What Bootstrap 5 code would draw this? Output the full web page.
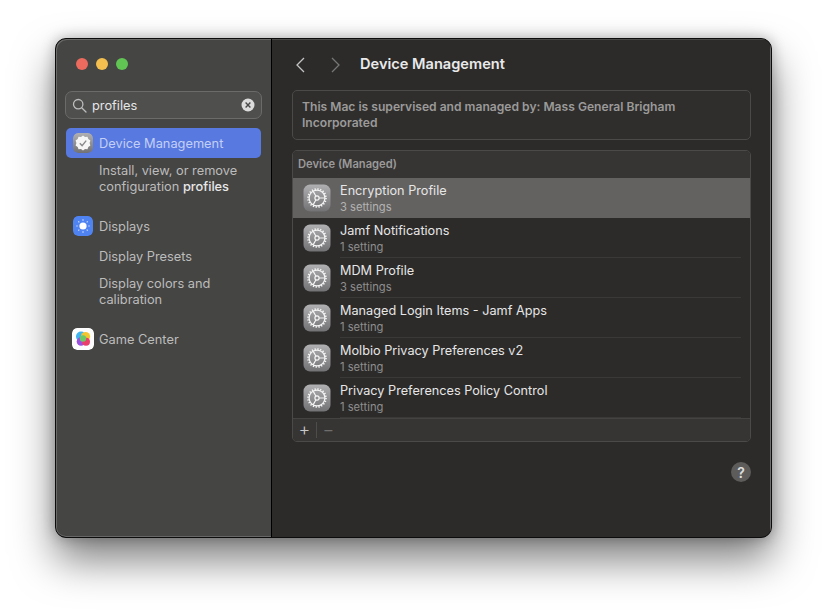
<!DOCTYPE html>
<html lang="en">

<head>
    <meta charset="UTF-8">
    <meta name="viewport" content="width=device-width, initial-scale=1.0">
    <title>Device Management</title>
    <link href="https://cdn.jsdelivr.net/npm/bootstrap@5.3.0/dist/css/bootstrap.min.css" rel="stylesheet">
    <style>
        body {
            background: #fff;
            font-family: Inter, "Liberation Sans", sans-serif;
            font-size: 12.8px;
            overflow: hidden;
            height: 611px;
            padding: 38px 55px 0 55px;
        }

        .mac-window {
            width: 717px;
            height: 500px;
            border-radius: 11px;
            border: 1px solid #0c0c0c;
            box-shadow: 0 22px 42px rgba(0, 0, 0, .5), 0 0 14px rgba(0, 0, 0, .28);
            overflow: hidden;
            background: #2c2b2a;
        }

        .side-pane {
            width: 216px;
            flex: none;
            background: #454544;
            border-right: 1px solid #000;
            box-shadow: inset 1px 1px 0 #6a6a69, inset 0 -1px 0 #666;
            border-radius: 10px 0 0 10px;
            padding: 0 10px;
            color: #bcbcbb;
        }

        .lights {
            height: 52px;
            padding: 19px 0 0 10px;
            gap: 8px;
        }

        .light {
            width: 12px;
            height: 12px;
            border-radius: 50%;
        }

        .search-box {
            height: 28px;
            margin: 0 -1px 9px -1px;
            padding: 0 6px 0 6px;
            gap: 5px;
            border: 1px solid #6b6b6a;
            border-radius: 7px;
            background: #4f4f4e;
            color: #e6e6e6;
        }

        .search-box span {
            padding-top: 1px;
        }

        .side-item {
            height: 30px;
            padding-left: 7px;
            gap: 6px;
            border-radius: 5px;
            white-space: nowrap;
        }

        .side-item span {
            padding-top: 2px;
        }

        .side-active {
            background: #5879e0;
            color: #c3cff5;
        }

        .side-sub {
            padding-left: 33px;
            line-height: 16px;
        }

        .side-sub b {
            font-weight: 500;
            color: #e8e8e8;
        }

        .gap-a {
            margin-top: 5px;
        }

        .gap-b {
            margin-top: 8px;
        }

        .gap-c {
            margin-top: 11px;
            line-height: 15.5px;
        }

        .gap-d {
            margin-top: 17px;
        }

        .app-icon {
            width: 20px;
            height: 20px;
            flex: none;
            border-radius: 5px;
            display: block;
        }

        .main-pane {
            padding: 0 20px 0 20px;
            box-shadow: inset -1px 0 0 #6f6f6e, inset 0 1px 0 #4a4a49;
        }

        .title-bar {
            height: 51px;
            color: #e9e9e9;
        }

        .title-text {
            font-size: 14.6px;
            font-weight: 600;
            margin-left: 19px;
        }

        .notice-box {
            height: 50px;
            padding: 8px 9px;
            line-height: 16px;
            border: 1px solid #4b4a49;
            border-radius: 5px;
            background: #2f2e2d;
            color: #9b9a99;
            font-size: 12.1px;
            font-weight: 600;
            margin-bottom: 10px;
        }

        .profile-box {
            height: 292px;
            border: 1px solid #4b4a49;
            border-radius: 5px;
            overflow: hidden;
        }

        .profile-head {
            height: 27px;
            padding: 0 5px;
            background: #363534;
            color: #9b9a99;
            font-size: 11.2px;
            font-weight: 600;
        }

        .profile-row {
            height: 40px;
            padding-left: 10px;
            gap: 9px;
            color: #e6e6e6;
            font-size: 12.7px;
        }

        .profile-row .row-text {
            flex: 1;
            height: 100%;
            display: flex;
            flex-direction: column;
            justify-content: center;
            line-height: 16px;
            margin-right: 9px;
            padding-top: 2px;
            border-bottom: 1px solid #3a3938;
        }

        .profile-row:last-of-type .row-text,
        .row-selected .row-text {
            border-bottom: 0;
        }

        .row-selected {
            background: #636261;
        }

        .row-sub {
            font-size: 11.2px;
            color: #8f8e8d;
        }

        .row-selected .row-sub {
            color: #b3b2b1;
        }

        .gear-icon {
            width: 28px;
            height: 28px;
            flex: none;
            display: block;
        }

        .profile-foot {
            height: 23px;
            background: #363534;
            border-top: 1px solid #444342;
        }

        .foot-btn {
            width: 23px;
            height: 100%;
            font-size: 18px;
            font-weight: 300;
            line-height: 1;
        }

        .foot-sep {
            width: 1px;
            height: 16px;
            background: #4e4d4c;
        }

        .help-btn {
            width: 20px;
            height: 20px;
            margin: 20px 0 0 auto;
            border-radius: 50%;
            background: #5d5c5b;
            color: #dedede;
            font-size: 14px;
            font-weight: 600;
        }
    </style>
</head>

<body>
    <svg width="0" height="0" class="position-absolute">
        <defs>
            <linearGradient id="grayTile" x1="0" y1="0" x2="0" y2="1">
                <stop offset="0" stop-color="#b0b0b2" />
                <stop offset="1" stop-color="#727275" />
            </linearGradient>
            <symbol id="gear" viewBox="0 0 28 28">
                <rect x=".5" y=".5" width="27" height="27" rx="6.500" fill="url(#grayTile)" />
                <circle cx="14" cy="14" r="9" fill="none" stroke="#f4f4f4" stroke-width="1.700" stroke-dasharray="1.300 1.530" />
                <circle cx="14" cy="14" r="7.900" fill="none" stroke="#f4f4f4" stroke-width="1.300" />
                <circle cx="14" cy="14" r="2.100" fill="none" stroke="#f4f4f4" stroke-width="1.200" />
                <path d="M16.100 14h5.500M13 12.200 10.200 7.400M13 15.800l-2.800 4.800" stroke="#f4f4f4" stroke-width="1.200" fill="none" />
            </symbol>
        </defs>
    </svg>

    <div class="mac-window d-flex">
        <!-- Sidebar -->
        <div class="side-pane">
            <div class="lights d-flex">
                <span class="light" style="background:#ec6a5e"></span>
                <span class="light" style="background:#f4bf4f"></span>
                <span class="light" style="background:#61c554"></span>
            </div>

            <div class="search-box d-flex align-items-center">
                <svg width="15" height="15" viewBox="0 0 15 15" fill="none" stroke="#bdbdbd" stroke-width="1.300">
                    <circle cx="6.200" cy="6.200" r="4.700" />
                    <path d="M9.700 9.700 14 14" stroke-linecap="round" />
                </svg>
                <span class="flex-grow-1">profiles</span>
                <svg width="14" height="14" viewBox="0 0 14 14">
                    <circle cx="7" cy="7" r="6.500" fill="#dcdcdc" />
                    <path d="M4.600 4.600l4.800 4.800M9.400 4.600 4.600 9.400" stroke="#4a4a4a" stroke-width="1.400" />
                </svg>
            </div>

            <div class="side-item side-active d-flex align-items-center">
                <svg class="app-icon" viewBox="0 0 20 20">
                    <rect width="20" height="20" rx="5" fill="url(#grayTile)" />
                    <path d="M10 2.500l2 1.500 2.500-.2.800 2.300 2.100 1.500-.8 2.400.8 2.400-2.100 1.500-.8 2.300-2.500-.2-2 1.500-2-1.500-2.500.2-.8-2.300-2.100-1.500.8-2.400-.8-2.400 2.100-1.500.8-2.300 2.500.2z" fill="#f6f6f6" />
                    <path d="M6.800 10.300l2.300 2.300 4.100-5" fill="none" stroke="#8a8a8d" stroke-width="1.400" />
                </svg>
                <span>Device Management</span>
            </div>
            <div class="side-sub gap-a">Install, view, or remove<br>configuration <b>profiles</b></div>

            <div class="side-item d-flex align-items-center mt-3">
                <svg class="app-icon" viewBox="0 0 20 20">
                    <rect width="20" height="20" rx="5" fill="#4f83f1" />
                    <circle cx="10" cy="10" r="3.600" fill="#fff" />
                    <path d="M10 3.300v1.400M10 15.300v1.400M3.300 10h1.400M15.300 10h1.400M5.300 5.300l1 1M13.700 13.700l1 1M14.700 5.300l-1 1M6.300 13.700l-1 1" stroke="#d5e2fc" stroke-width="1.100" />
                </svg>
                <span>Displays</span>
            </div>
            <div class="side-sub gap-b">Display Presets</div>
            <div class="side-sub gap-c">Display colors and<br>calibration</div>

            <div class="side-item d-flex align-items-center gap-d">
                <svg class="app-icon" style="width:22px;height:22px;margin-left:-1px;margin-right:-1px" viewBox="0 0 22 22">
                    <rect width="22" height="22" rx="5" fill="#fdfdfd" />
                    <circle cx="9" cy="8.500" r="5" fill="#3fb4ef" />
                    <circle cx="13.500" cy="8.500" r="4.600" fill="#f3c531" />
                    <circle cx="9" cy="13.500" r="4.300" fill="#9a4fe0" />
                    <circle cx="14" cy="13.700" r="4" fill="#ea3f6a" />
                    <circle cx="11" cy="10.500" r="3.200" fill="#6cc866" />
                </svg>
                <span>Game Center</span>
            </div>
        </div>

        <!-- Main content -->
        <div class="main-pane flex-grow-1">
            <div class="title-bar d-flex align-items-center">
                <svg width="12" height="18" viewBox="0 0 12 18" fill="none" stroke="#c4c4c4" stroke-width="1.300" style="margin-left:2px">
                    <path d="M10 2 3 9l7 7" />
                </svg>
                <svg width="12" height="18" viewBox="0 0 12 18" fill="none" stroke="#777" stroke-width="1.300" style="margin-left:23px">
                    <path d="M3 2l7 7-7 7" />
                </svg>
                <span class="title-text">Device Management</span>
            </div>

            <div class="notice-box">This Mac is supervised and managed by: Mass General Brigham Incorporated</div>

            <div class="profile-box d-flex flex-column">
                <div class="profile-head d-flex align-items-center">Device (Managed)</div>

                <div class="profile-row row-selected d-flex align-items-center">
                    <svg class="gear-icon"><use href="#gear" /></svg>
                    <div class="row-text"><span>Encryption Profile</span><span class="row-sub">3 settings</span></div>
                </div>
                <div class="profile-row d-flex align-items-center">
                    <svg class="gear-icon"><use href="#gear" /></svg>
                    <div class="row-text"><span>Jamf Notifications</span><span class="row-sub">1 setting</span></div>
                </div>
                <div class="profile-row d-flex align-items-center">
                    <svg class="gear-icon"><use href="#gear" /></svg>
                    <div class="row-text"><span>MDM Profile</span><span class="row-sub">3 settings</span></div>
                </div>
                <div class="profile-row d-flex align-items-center">
                    <svg class="gear-icon"><use href="#gear" /></svg>
                    <div class="row-text"><span>Managed Login Items - Jamf Apps</span><span class="row-sub">1 setting</span></div>
                </div>
                <div class="profile-row d-flex align-items-center">
                    <svg class="gear-icon"><use href="#gear" /></svg>
                    <div class="row-text"><span>Molbio Privacy Preferences v2</span><span class="row-sub">1 setting</span></div>
                </div>
                <div class="profile-row d-flex align-items-center">
                    <svg class="gear-icon"><use href="#gear" /></svg>
                    <div class="row-text"><span>Privacy Preferences Policy Control</span><span class="row-sub">1 setting</span></div>
                </div>

                <div class="profile-foot d-flex align-items-center">
                    <span class="foot-btn d-flex align-items-center justify-content-center" style="color:#c8c8c8">+</span>
                    <span class="foot-sep"></span>
                    <span class="foot-btn d-flex align-items-center justify-content-center" style="color:#6f6e6d">&minus;</span>
                </div>
            </div>

            <div class="help-btn d-flex align-items-center justify-content-center">?</div>
        </div>
    </div>

    <script src="https://cdn.jsdelivr.net/npm/bootstrap@5.3.0/dist/js/bootstrap.bundle.min.js"></script>
</body>

</html>
